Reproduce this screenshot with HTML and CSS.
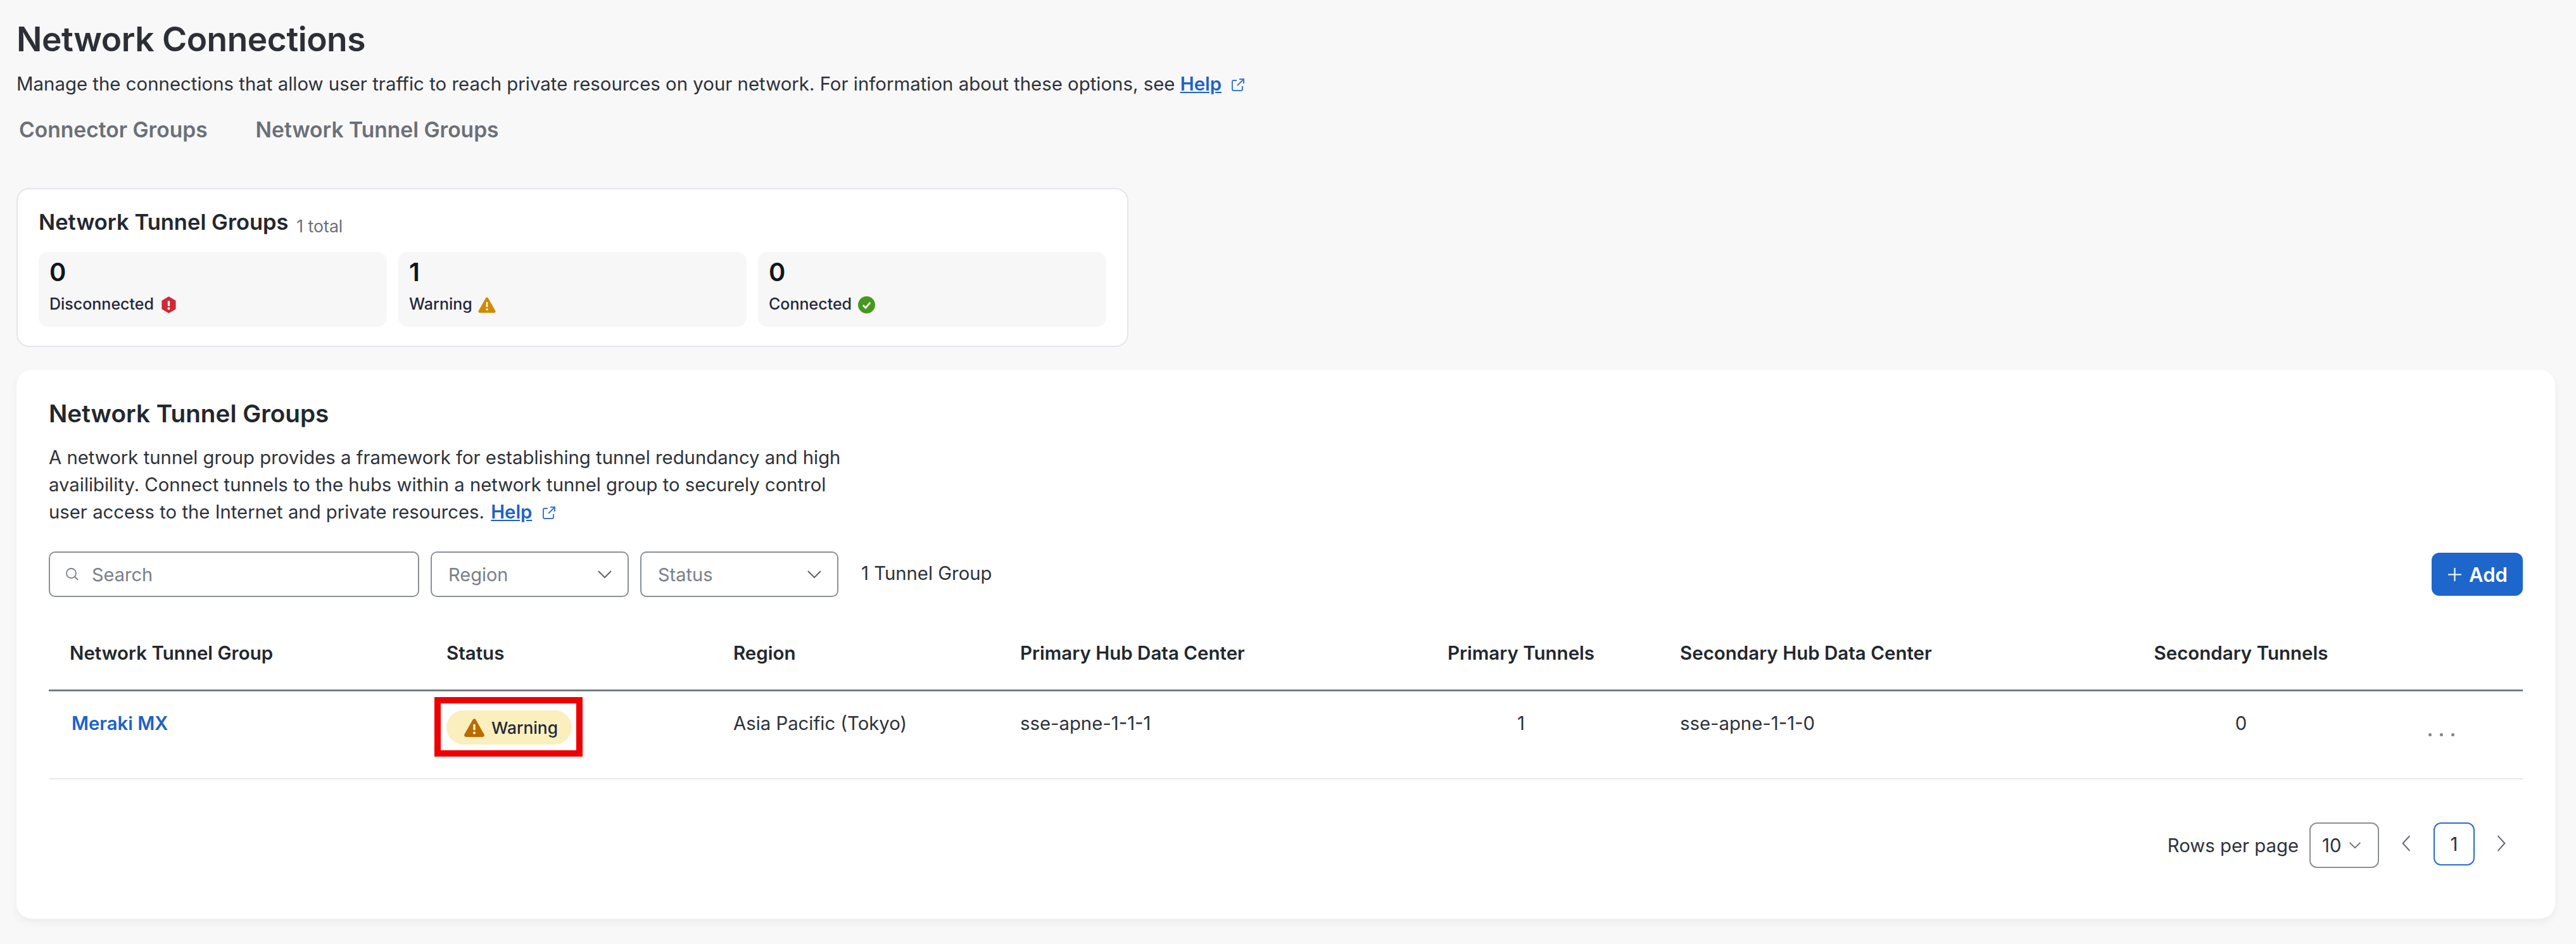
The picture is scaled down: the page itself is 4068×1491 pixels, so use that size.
FILE: index.html
```html
<!DOCTYPE html>
<html lang="en">
<head>
<meta charset="utf-8">
<title>Network Connections</title>
<link rel="stylesheet" href="styles.css">
</head>
<body>
<svg class="defs" width="0" height="0" aria-hidden="true">
  <symbol id="ext" viewBox="0 0 24 24"><path d="M10 5H5a2 2 0 0 0-2 2v12a2 2 0 0 0 2 2h12a2 2 0 0 0 2-2v-5M14 3h7v7M21 3l-10 10" fill="none" stroke="currentColor" stroke-width="2"/></symbol>
  <symbol id="warn" viewBox="0 0 32 30"><path d="M16 2c1 0 1.800.5 2.300 1.400l12.400 22c.9 1.700-.2 3.600-2.200 3.600H3.500c-2 0-3.100-1.900-2.200-3.600l12.400-22C14.200 2.500 15 2 16 2z" fill="currentColor"/><rect x="14.400" y="10" width="3.200" height="9" rx="1" fill="#fff4d0"/><circle cx="16" cy="23" r="2" fill="#fff4d0"/></symbol>
  <symbol id="chev" viewBox="0 0 24 14"><path d="M2 2l10 10L22 2" fill="none" stroke="currentColor" stroke-width="2"/></symbol>
</svg>
<main class="page">
  <h1 class="title">Network Connections</h1>
  <p class="intro">Manage the connections that allow user traffic to reach private resources on your network. For information about these options, see <a class="help" href="#">Help</a> <svg class="ext"><use href="#ext"/></svg></p>
  <nav class="tabs"><span class="tab">Connector Groups</span><span class="tab">Network Tunnel Groups</span></nav>

  <section class="summary">
    <h2 class="summary-title">Network Tunnel Groups <span class="total">1 total</span></h2>
    <div class="tiles">
      <div class="tile"><div class="num">0</div><div class="tile-label">Disconnected
        <svg class="tile-icon" viewBox="0 0 26 28"><path d="M13 1.500l10.500 6v13L13 26.500l-10.500-6v-13z" fill="#cf2a36" stroke="#cf2a36" stroke-width="2" stroke-linejoin="round"/><rect x="11.300" y="7.500" width="3.400" height="8.500" rx="1" fill="#fff"/><circle cx="13" cy="20" r="2" fill="#fff"/></svg></div></div>
      <div class="tile"><div class="num">1</div><div class="tile-label">Warning
        <svg class="tile-icon warn-amber"><use href="#warn"/></svg></div></div>
      <div class="tile"><div class="num">0</div><div class="tile-label">Connected
        <svg class="tile-icon" viewBox="0 0 26 26"><circle cx="13" cy="13" r="13" fill="#45991f"/><path d="M7.500 13.500l4 4 7-8" fill="none" stroke="#fff" stroke-width="2.600"/></svg></div></div>
    </div>
  </section>

  <section class="panel">
    <h2 class="panel-title">Network Tunnel Groups</h2>
    <p class="panel-text">
      <span class="line">A network tunnel group provides a framework for establishing tunnel redundancy and high</span>
      <span class="line">availibility. Connect tunnels to the hubs within a network tunnel group to securely control</span>
      <span class="line"><span>user access to the Internet and private resources.</span> <a class="help" href="#">Help</a> <svg class="ext"><use href="#ext"/></svg></span>
    </p>
    <div class="toolbar">
      <div class="field search">
        <svg class="search-icon" viewBox="0 0 24 24"><circle cx="10.500" cy="10.500" r="7.500" fill="none" stroke="currentColor" stroke-width="1.800"/><path d="M16 16l5 5" stroke="currentColor" stroke-width="1.800"/></svg>
        <span>Search</span>
      </div>
      <div class="field select"><span>Region</span><svg class="chev"><use href="#chev"/></svg></div>
      <div class="field select"><span>Status</span><svg class="chev"><use href="#chev"/></svg></div>
      <span class="count">1 Tunnel Group</span>
      <button class="add"><svg class="plus" viewBox="0 0 24 24"><path d="M12 2v20M2 12h20" stroke="currentColor" stroke-width="2"/></svg>Add</button>
    </div>
    <table class="grid">
      <colgroup><col class="c1"><col class="c2"><col class="c3"><col class="c4"><col class="c5"><col class="c6"><col class="c7"><col class="c8"></colgroup>
      <thead>
        <tr><th>Network Tunnel Group</th><th class="tight">Status</th><th>Region</th><th>Primary Hub Data Center</th><th class="mid">Primary Tunnels</th><th>Secondary Hub Data Center</th><th class="mid">Secondary Tunnels</th><th></th></tr>
      </thead>
      <tbody>
        <tr>
          <td><a class="row-link" href="#">Meraki MX</a></td>
          <td class="tight">
            <span class="callout"><span class="badge"><svg class="badge-icon"><use href="#warn"/></svg>Warning</span></span>
          </td>
          <td>Asia Pacific (Tokyo)</td>
          <td>sse-apne-1-1-1</td>
          <td class="mid">1</td>
          <td>sse-apne-1-1-0</td>
          <td class="mid">0</td>
          <td class="dots-cell"><span class="dots"><i></i><i></i><i></i></span></td>
        </tr>
      </tbody>
    </table>
    <div class="pager">
      <span class="rows">Rows per page</span>
      <div class="size"><span>10</span><svg class="chev small"><use href="#chev"/></svg></div>
      <svg class="nav prev" viewBox="0 0 14 26"><path d="M12 2L2 13l10 11" fill="none" stroke="currentColor" stroke-width="1.800"/></svg>
      <span class="page-no">1</span>
      <svg class="nav next" viewBox="0 0 14 26"><path d="M2 2l10 11L2 24" fill="none" stroke="currentColor" stroke-width="1.800"/></svg>
    </div>
  </section>
</main>
</body>
</html>
```
FILE: styles.css
```css
* { box-sizing: border-box; }
html, body { margin: 0; padding: 0; }
body { background: #f8f8f8; font-family: Inter, "Liberation Sans", sans-serif; color: #2b3038; width: 4068px; height: 1491px; overflow: hidden; }
.defs { position: absolute; }
.page { padding: 32px 33px 0 26px; }
.title { margin: 0; font-size: 53.3px; line-height: 60px; font-weight: 600; color: #2c3036; letter-spacing: -0.5px; }
.intro { margin: 21px 0 0; font-size: 29.4px; line-height: 40px; color: #2d323a; white-space: nowrap; }
.help { color: #1d62c7; font-weight: 600; text-decoration: underline; }
.ext { width: 24px; height: 24px; color: #3b78d3; vertical-align: -3px; margin-left: 6px; }
.tabs { display: flex; gap: 76px; margin: 30px 0 0 4px; }
.tab { font-size: 33.6px; line-height: 44px; font-weight: 600; color: #6b7078; }
.summary { width: 1756px; height: 251px; margin-top: 70px; background: #fff; border: 2px solid #e3e6ea; border-radius: 20px; padding: 30px 33px 0; }
.summary-title { margin: 0; font-size: 34.5px; line-height: 44px; font-weight: 600; color: #23272e; }
.total { font-size: 26.7px; font-weight: 400; color: #6b7078; margin-left: 4px; vertical-align: -4px; }
.tiles { display: grid; grid-template-columns: repeat(3, 1fr); gap: 18px; margin-top: 19px; }
.tile { height: 118px; background: #f7f7f7; border-radius: 14px; padding: 10px 17px 0; }
.num { font-size: 40px; line-height: 44px; font-weight: 600; color: #12161c; }
.tile-label { display: flex; align-items: center; gap: 10px; margin-top: 13px; font-size: 25px; line-height: 30px; font-weight: 500; color: #23283a; }
.tile-icon { width: 27px; height: 27px; margin-top: 3px; }
.warn-amber { color: #d08a00; width: 30px; margin-left: -2px; }
.panel { height: 867px; margin-top: 36px; background: #fff; border-radius: 24px; padding: 46px 51px 0; box-shadow: 0 6px 14px rgba(0, 0, 0, 0.05); }
.panel-title { margin: 0; font-size: 38.7px; line-height: 46px; font-weight: 600; color: #23272e; }
.panel-text { margin: 25px 0 0; font-size: 29.3px; line-height: 43px; color: #2d323a; white-space: nowrap; }
.line { display: block; }
.line span { margin-right: 2px; }
.toolbar { display: flex; align-items: center; gap: 18px; height: 72px; margin-top: 41px; }
.field { display: flex; align-items: center; height: 72px; border: 2px solid #8b9098; border-radius: 10px; font-size: 29px; color: #7b8088; background: #fff; }
.search { width: 585px; padding-left: 23px; gap: 19px; }
.search-icon { width: 24px; height: 24px; color: #7b8088; }
.select { width: 313px; padding: 0 24px 0 26px; justify-content: space-between; }
.chev { width: 24px; height: 14px; color: #5f646c; }
.chev.small { width: 20px; height: 12px; }
.count { margin: 0 0 4px 18px; font-size: 29.3px; color: #2d323a; }
.add { display: flex; align-items: center; gap: 10px; margin-left: auto; width: 144px; height: 68px; justify-content: center; border: 0; border-radius: 12px; background: #1d66cc; color: #fff; font: 600 31px Inter, sans-serif; }
.plus { width: 25px; height: 25px; }
.grid { width: 3907px; table-layout: fixed; border-collapse: collapse; margin-top: 31px; }
.c1 { width: 595px; } .c2 { width: 453px; } .c3 { width: 453px; } .c4 { width: 606px; } .c5 { width: 436px; } .c6 { width: 680px; } .c7 { width: 478px; } .c8 { width: 206px; }
th { height: 116px; padding: 0 0 0 33px; text-align: left; font-size: 29.5px; font-weight: 600; color: #23272e; border-bottom: 3px solid #777c84; white-space: nowrap; }
td { height: 140px; padding: 0 0 36px 33px; font-size: 29.3px; color: #2d323a; border-bottom: 2px solid #e6e8eb; white-space: nowrap; }
th.tight, td.tight { padding-left: 33px; }
th.mid, td.mid { text-align: center; padding-left: 0; padding-right: 0; }
.row-link { color: #1d62c7; font-weight: 600; text-decoration: none; margin-left: 3px; }
.callout { display: inline-block; border: 10px solid #ee0000; padding: 11px 7px 9px 9px; margin: 0; position: relative; top: 6px; left: -19px; }
.badge { display: flex; align-items: center; width: 198px; height: 54px; padding-left: 27px; gap: 10px; background: #faefbd; border-radius: 27px; font-size: 26.3px; font-weight: 500; color: #23283a; }
.badge-icon { width: 34px; height: 32px; color: #bb6a00; }
.dots-cell { padding-left: 57px; }
.dots { display: flex; gap: 13px; position: relative; top: 18px; }
.dots i { width: 5px; height: 5px; background: #80858c; border-radius: 50%; }
.pager { display: flex; align-items: center; justify-content: flex-end; margin-top: 68px; padding-right: 26px; height: 72px; }
.rows { font-size: 29.3px; color: #2d323a; margin-right: 17px; }
.size { display: flex; align-items: center; justify-content: space-between; width: 110px; height: 72px; padding: 0 26px 0 18px; border: 2px solid #8b9098; border-radius: 12px; font-size: 29.3px; color: #2d323a; }
.nav { width: 16px; height: 28px; color: #5f646c; margin-top: -6px; }
.prev { margin-left: 35px; margin-right: 35px; }
.next { margin-left: 34px; }
.page-no { display: flex; align-items: center; justify-content: center; align-self: flex-start; width: 65px; height: 68px; border: 2px solid #2a6dcc; border-radius: 12px; font-size: 29.3px; color: #2d323a; }
```
